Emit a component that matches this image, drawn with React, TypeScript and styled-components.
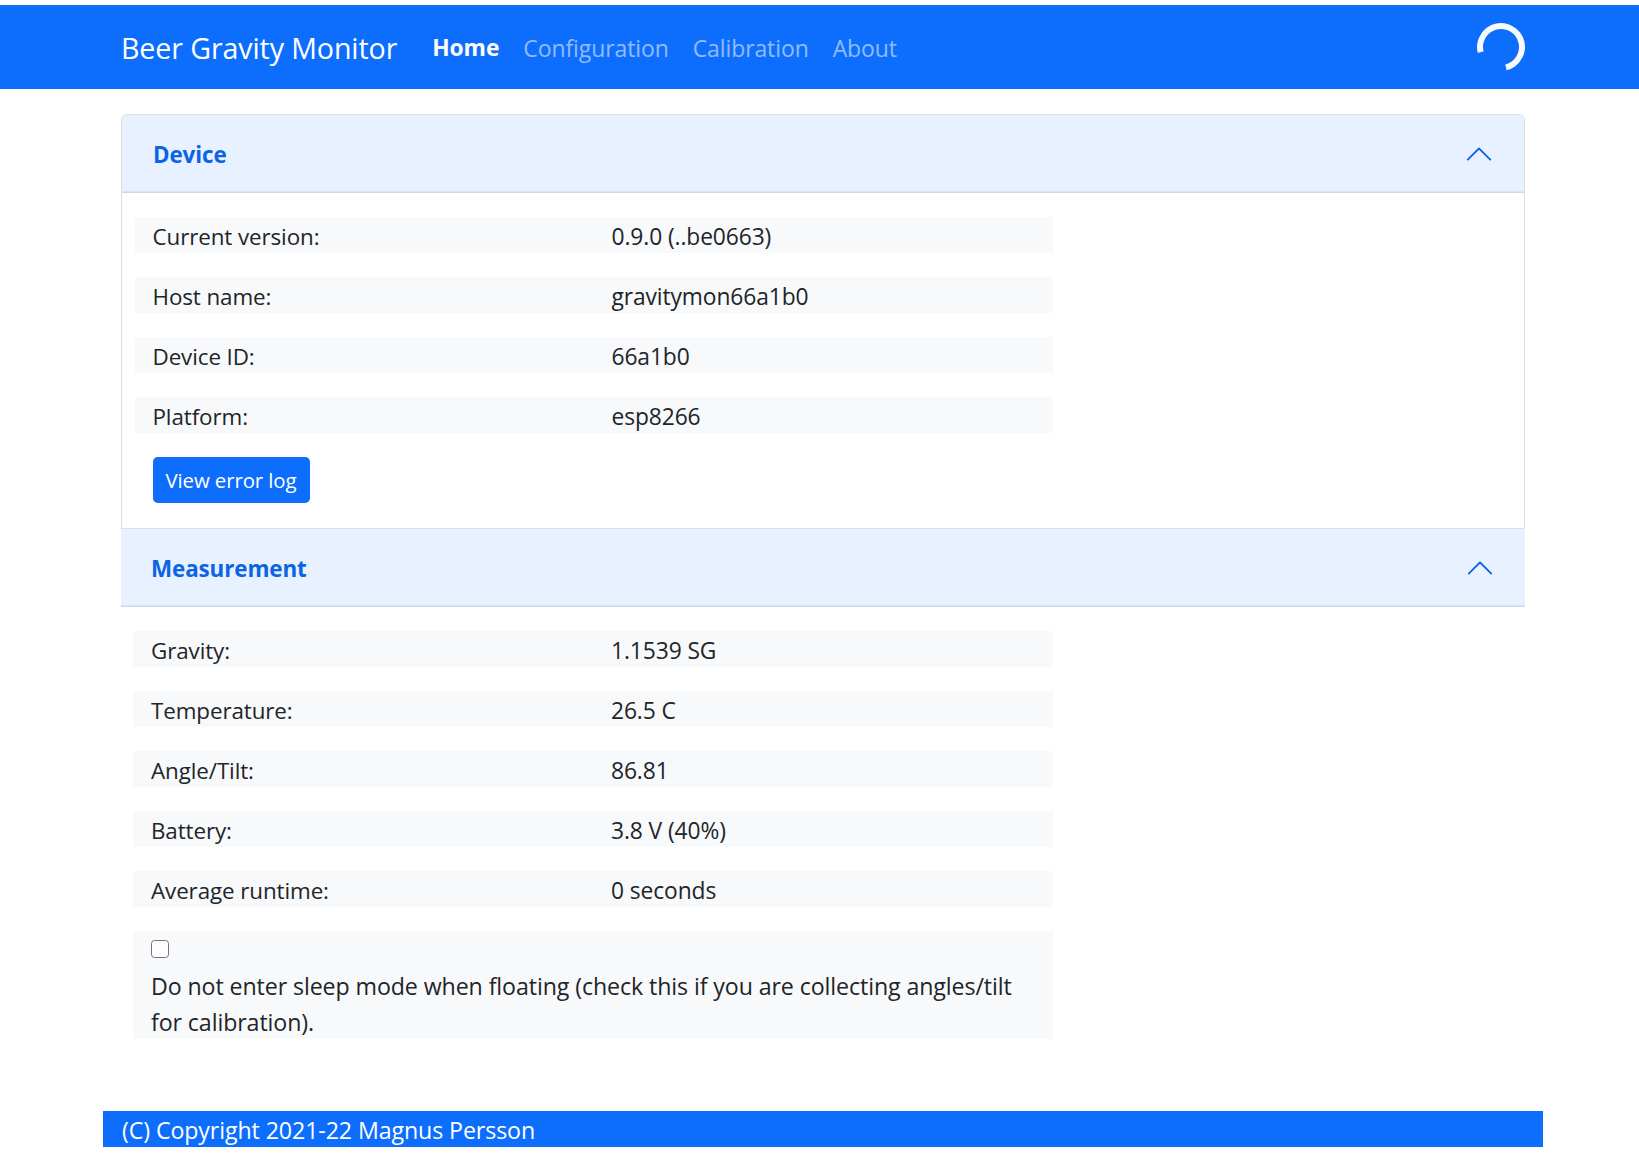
import React from "react";
import styled, { createGlobalStyle } from "styled-components";

const Global = createGlobalStyle`
  html, body { margin: 0; padding: 0; background: #fff; }
  body {
    font-family: "Open Sans", "Noto Sans", "Liberation Sans", sans-serif;
    font-size: 22.4px;
    line-height: 36px;
    color: #212529;
    letter-spacing: -0.1px;
  }
`;

const Page = styled.div`
  padding-top: 5px;
`;

const Navbar = styled.nav`
  display: flex;
  align-items: center;
  height: 84px;
  padding: 0 114px 0 121px;
  background: #0d6efd;
  box-sizing: border-box;
`;

const Brand = styled.a`
  color: #fff;
  font-size: 28.6px;
  padding-top: 2px;
  margin-right: 23px;
  white-space: nowrap;
`;

const NavLink = styled.a<{ $active?: boolean }>`
  padding: 2px 12px 0;
  font-size: ${(p) => (p.$active ? "22.8px" : "23px")};
  color: ${(p) => (p.$active ? "#fff" : "rgba(255,255,255,.55)")};
  font-weight: ${(p) => (p.$active ? 700 : 400)};
`;

const Spinner = styled.div`
  margin-left: auto;
  width: 48px;
  height: 48px;
  box-sizing: border-box;
  border: 6px solid #f8f9fa;
  border-bottom-color: transparent;
  border-radius: 50%;
  transform: rotate(31deg);
`;

const Main = styled.main`
  margin: 24.5px 114px 0 121px;
`;

const Item = styled.section<{ $bordered?: boolean }>`
  ${(p) =>
    p.$bordered
      ? `border: 1.5px solid #dfdfdf; border-bottom: 0; border-radius: 6px 6px 0 0; overflow: hidden;`
      : ``}
`;

const Header = styled.div<{ $topLine?: boolean }>`
  display: flex;
  align-items: center;
  justify-content: space-between;
  box-sizing: border-box;
  height: ${(p) => (p.$topLine ? "79.5px" : "78px")};
  padding: ${(p) => (p.$topLine ? "0 30px" : "0 30px 0 31px")};
  background: #e7f1ff;
  box-shadow: inset 0 -1.5px 0 #d0d8e6;
  ${(p) => (p.$topLine ? "border-top: 1.5px solid #dfdfdf;" : "")}
`;

const Title = styled.span`
  color: #0c63e4;
  font-weight: 700;
  padding-top: 2px;
`;

const Chevron = styled.svg`
  display: block;
  width: 30px;
  height: 30px;
  fill: #0c63e4;
  transform: rotate(180deg);
`;

const Body = styled.div<{ $inset: number; $width: number }>`
  display: flex;
  flex-direction: column;
  align-items: flex-start;
  gap: 24px;
  padding: 24px 0 0 ${(p) => p.$inset}px;
  > * { width: ${(p) => p.$width}px; box-sizing: border-box; }
`;

const Row = styled.div`
  display: grid;
  grid-template-columns: 1fr 1fr;
  background: #f8f9fa;
  height: 36px;
`;

const Cell = styled.div<{ $value?: boolean }>`
  padding: 2px 18px 0;
  white-space: nowrap;
  ${(p) => (p.$value ? "font-size: 22.8px;" : "")}
`;

const Actions = styled.div`
  padding: 0 0 25px 18px;
`;

const Button = styled.button`
  display: block;
  height: 46px;
  width: 157px;
  padding: 0;
  border: 0;
  border-radius: 4.8px;
  background: #0d6efd;
  color: #fff;
  font-family: inherit;
  font-size: 20.4px;
  letter-spacing: -0.1px;
`;

const CheckRow = styled.div`
  height: 108px;
  background: #f8f9fa;
  padding: 0 18px;
`;

const CheckLine = styled.div`
  display: flex;
  align-items: center;
  height: 36px;
`;

const Check = styled.input`
  appearance: none;
  margin: 0;
  width: 18px;
  height: 18px;
  box-sizing: border-box;
  background: #fff;
  border: 1.5px solid #6c757d;
  border-radius: 3.5px;
`;

const CheckLabel = styled.label`
  display: block;
  padding-top: 1px;
  font-size: 23.2px;
`;

const Footer = styled.footer`
  margin: 72px 96px 0 103px;
  padding: 0 18px 0 19px;
  height: 36px;
  background: #0d6efd;
  color: #fff;
  font-size: 23.2px;
  line-height: 38px;
  box-sizing: border-box;
`;

const ChevronIcon = () => (
  <Chevron viewBox="0 0 16 16">
    <path
      fillRule="evenodd"
      d="M1.646 4.646a.5.5 0 0 1 .708 0L8 10.293l5.646-5.647a.5.5 0 0 1 .708.708l-6 6a.5.5 0 0 1-.708 0l-6-6a.5.5 0 0 1 0-.708z"
    />
  </Chevron>
);

const device = [
  ["Current version:", "0.9.0 (..be0663)"],
  ["Host name:", "gravitymon66a1b0"],
  ["Device ID:", "66a1b0"],
  ["Platform:", "esp8266"],
];

const measurement = [
  ["Gravity:", "1.1539 SG"],
  ["Temperature:", "26.5 C"],
  ["Angle/Tilt:", "86.81"],
  ["Battery:", "3.8 V (40%)"],
  ["Average runtime:", "0 seconds"],
];

const Rows = ({ rows }: { rows: string[][] }) => (
  <>
    {rows.map(([k, v]) => (
      <Row key={k}>
        <Cell>{k}</Cell>
        <Cell $value>{v}</Cell>
      </Row>
    ))}
  </>
);

export default function App() {
  return (
    <Page>
      <Global />
      <Navbar>
        <Brand>Beer Gravity Monitor</Brand>
        <NavLink $active>Home</NavLink>
        <NavLink>Configuration</NavLink>
        <NavLink>Calibration</NavLink>
        <NavLink>About</NavLink>
        <Spinner />
      </Navbar>
      <Main>
        <Item $bordered>
          <Header>
            <Title>Device</Title>
            <ChevronIcon />
          </Header>
          <Body $inset={12.5} $width={918}>
            <Rows rows={device} />
            <Actions>
              <Button>View error log</Button>
            </Actions>
          </Body>
        </Item>
        <Item>
          <Header $topLine>
            <Title>Measurement</Title>
            <ChevronIcon />
          </Header>
          <Body $inset={12} $width={920}>
            <Rows rows={measurement} />
            <CheckRow>
              <CheckLine>
                <Check type="checkbox" id="sleep" />
              </CheckLine>
              <CheckLabel htmlFor="sleep">
                Do not enter sleep mode when floating (check this if you are collecting angles/tilt for calibration).
              </CheckLabel>
            </CheckRow>
          </Body>
        </Item>
      </Main>
      <Footer>(C) Copyright 2021-22 Magnus Persson</Footer>
    </Page>
  );
}
